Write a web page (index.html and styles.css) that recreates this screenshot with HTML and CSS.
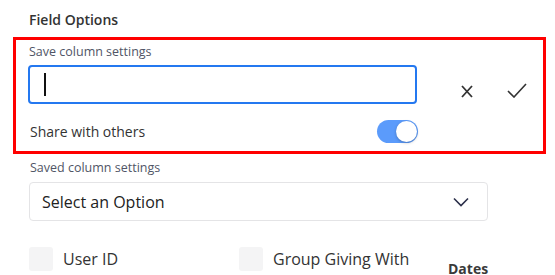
FILE: index.html
```html
<!DOCTYPE html>
<html>
<head>
<meta charset="utf-8">
<link rel="stylesheet" href="styles.css">
</head>
<body>
<div class="page">
  <div class="title">Field Options</div>
  <div class="highlight">
    <div class="label">Save column settings</div>
    <div class="save-row">
      <div class="input"><span class="caret"></span></div>
      <div class="actions">
        <svg class="icon-x" width="12" height="13" viewBox="0 0 12 13"><path d="M1 1 L11 12 M11 1 L1 12" stroke="#333" stroke-width="1.8" fill="none"/></svg>
        <svg class="icon-check" width="20" height="15" viewBox="0 0 20 15"><path d="M1 8 L7 14 L19 1" stroke="#333" stroke-width="1.6" fill="none"/></svg>
      </div>
    </div>
    <div class="share-row">
      <span class="share-text">Share with others</span>
      <span class="toggle"><span class="knob"></span></span>
    </div>
  </div>
  <div class="saved">
    <div class="label">Saved column settings</div>
    <div class="select">
      <span>Select an Option</span>
      <svg width="16" height="10" viewBox="0 0 16 10"><path d="M1 1.5 L8 8.5 L15 1.5" stroke="#2b2f4a" stroke-width="1.6" fill="none"/></svg>
    </div>
  </div>
  <div class="fields">
    <div class="check-item"><span class="box"></span><span>User ID</span></div>
    <div class="check-item"><span class="box"></span><span>Group Giving With</span></div>
    <div class="group-head">Dates</div>
  </div>
</div>
</body>
</html>
```
FILE: styles.css
```css
* { box-sizing: border-box; }
body {
  margin: 0;
  background: #fff;
  font-family: "Open Sans", "Noto Sans", sans-serif;
  color: #333;
}
.page {
  padding: 10px 0 0 13px;
  width: 555px;
}
.title {
  font-size: 14px;
  font-weight: 600;
  line-height: 20px;
  color: #333;
  padding-left: 16px;
  margin-bottom: 7px;
}
.highlight {
  width: 533px;
  height: 117px;
  border: 3px solid #ff0000;
  padding: 4px 0 0 12px;
}
.label {
  font-size: 12.5px;
  line-height: 16px;
  color: #505566;
  padding-left: 1px;
}
.save-row {
  display: flex;
  align-items: flex-start;
  margin-top: 5px;
}
.input {
  width: 389px;
  height: 39px;
  border: 2px solid #2478f0;
  border-radius: 4px;
  padding: 6px 0 0 14px;
}
.caret {
  display: block;
  width: 2px;
  height: 23px;
  background: #111;
}
.actions {
  display: flex;
  align-items: center;
  gap: 34px;
  margin-left: 44px;
  margin-top: 19px;
}
.icon-x { display: block; }
.icon-check { display: block; margin-top: -1px; }
.share-row {
  display: flex;
  align-items: center;
  width: 390px;
  justify-content: space-between;
  margin-top: 16px;
}
.share-text {
  font-size: 14px;
  line-height: 20px;
  padding-left: 2px;
  color: #333;
}
.toggle {
  position: relative;
  width: 41px;
  height: 23px;
  border-radius: 12px;
  background: #5b9bfb;
}
.knob {
  position: absolute;
  right: 1px;
  top: 1px;
  width: 21px;
  height: 21px;
  border-radius: 50%;
  background: #fff;
  box-shadow: 0 1px 3px rgba(0,0,0,0.25);
}
.saved {
  padding-left: 16px;
  margin-top: 6px;
}
.saved .label { padding-left: 1px; }
.select {
  width: 459px;
  height: 39px;
  margin-top: 6px;
  border: 1px solid #e4e4e6;
  border-radius: 4px;
  display: flex;
  align-items: center;
  justify-content: space-between;
  padding: 0 18px 0 12px;
  font-size: 16px;
  color: #222;
}
.select svg { display: block; }
.fields {
  display: grid;
  grid-template-columns: 210px 209px auto;
  padding-left: 16px;
  margin-top: 26px;
}
.check-item {
  display: flex;
  align-items: center;
  gap: 10px;
  font-size: 16px;
  color: #333;
  height: 24px;
}
.box {
  width: 24px;
  height: 24px;
  border-radius: 3px;
  background: #f4f4f5;
}
.group-head {
  font-size: 14px;
  font-weight: 700;
  color: #3a3a3a;
  line-height: 20px;
  margin-top: 12px;
}
```
